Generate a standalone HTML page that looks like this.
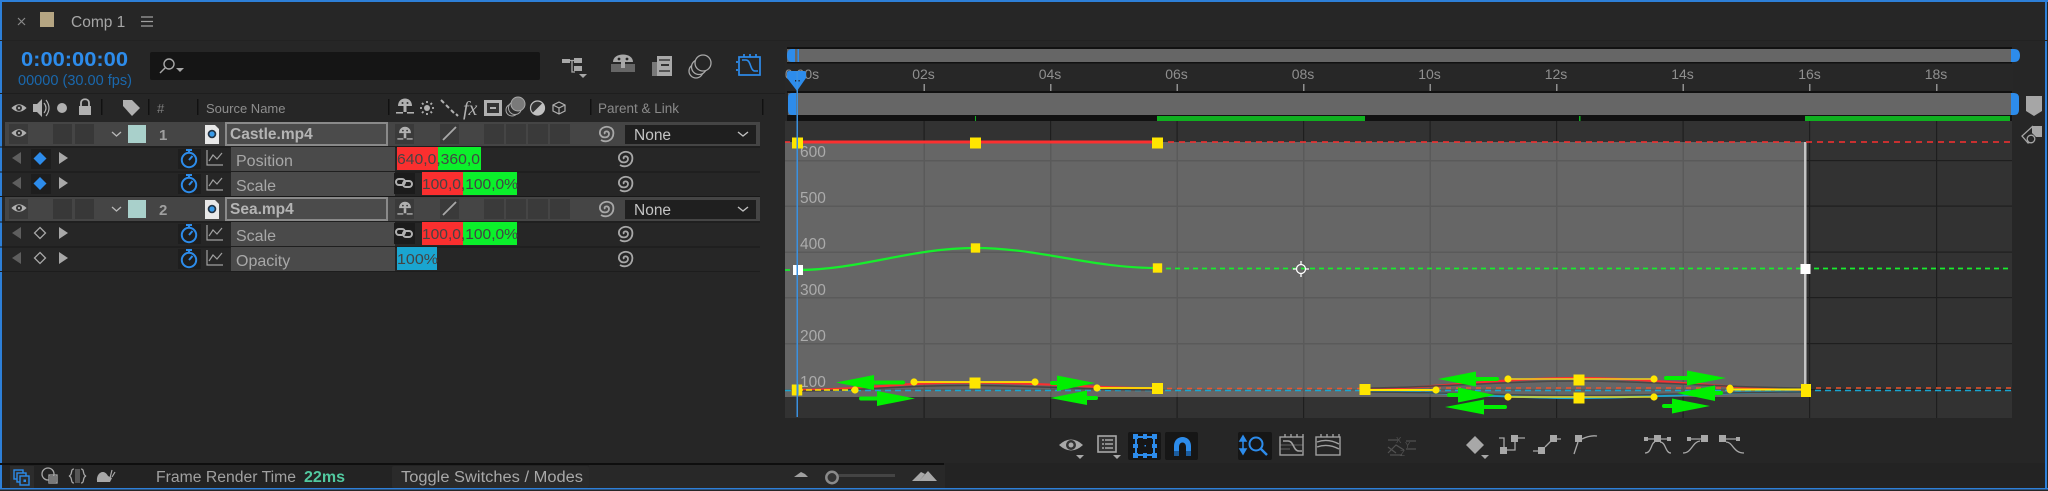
<!DOCTYPE html>
<html><head><meta charset="utf-8"><title>Comp 1</title>
<style>
html,body{margin:0;padding:0;background:#262626;width:2048px;height:491px;overflow:hidden}
svg{display:block}
text{font-family:"Liberation Sans",sans-serif}
</style></head><body>
<svg xmlns="http://www.w3.org/2000/svg" width="2048" height="491" viewBox="0 0 2048 491">
<defs>
<g id="eye"><path d="M-8 0Q0-8 8 0Q0 8-8 0Z" fill="#b0b0b0"/><circle r="3.2" fill="#333"/><circle r="1.2" fill="#b0b0b0"/></g>
<g id="spiral" fill="none" stroke="#a8a8a8" stroke-width="1.8"><path d="M-1 1C-3-2 3-3 3 1C3 5-4 6-6 1C-7-5 0-8 5-5C8-3 8 2 6 5C3 9-2 9-5 7"/></g>
<g id="shy"><path d="M-7-1C-7-11 7-11 7-1Z" fill="#b0b0b0"/><rect x="-1.5" y="-1" width="3" height="6" fill="#b0b0b0"/><circle cx="-2.5" cy="-4" r="1" fill="#333"/><circle cx="2.5" cy="-4" r="1" fill="#333"/><rect x="-9" y="5" width="7" height="1.6" fill="#b0b0b0"/><rect x="2" y="5" width="7" height="1.6" fill="#b0b0b0"/></g>
<g id="watch" fill="none" stroke="#2d8ceb" stroke-width="2"><circle cy="2" r="7.2"/><path d="M-3-8H3M0-8V-5M0 2L3.5-2"/></g>
<g id="gr" fill="none" stroke="#a0a0a0" stroke-width="1.2"><path d="M-8-8V7H8"/><path d="M-6 3L-2-3L2 1L7-5"/></g>
<g id="link" fill="none" stroke="#b0b0b0" stroke-width="2"><rect x="-8" y="-4" width="9" height="6" rx="3"/><rect x="-1" y="-2" width="9" height="6" rx="3"/></g>
<g id="file"><path d="M-7-9H3L7-5V10H-7Z" fill="#e8e8e8"/><circle r="4.3" fill="#234"/><circle r="2.6" fill="#3a9be8"/></g>
<path id="la" d="M4-6V6L-5 0Z" fill="#5e5e5e"/>
<path id="ra" d="M-4-6V6L5 0Z" fill="#a8a8a8"/>
<rect id="k" x="-5.500" y="-5.500" width="11" height="11" fill="#ffe600"/>
</defs>

<rect width="2048" height="491" fill="#262626"/>
<rect x="0" y="0" width="2048" height="2" fill="#2d7fd8"/>
<rect x="0" y="0" width="2" height="488" fill="#2d7fd8"/>
<rect x="2045" y="0" width="2" height="488" fill="#2d7fd8"/>
<rect x="0" y="488" width="2048" height="1.500" fill="#2d7fd8"/>

<!-- tab -->
<path d="M18 18L25 25M25 18L18 25" stroke="#8a8a8a" stroke-width="1.200"/>
<rect x="40" y="12" width="14" height="15" fill="#b5a582"/>
<text x="71" y="27" font-size="15.500" fill="#a6a6a6">Comp 1</text>
<path d="M141 17H153M141 21.500H153M141 26H153" stroke="#a0a0a0" stroke-width="1.200"/>
<rect x="0" y="40" width="2048" height="1" fill="#222"/>

<!-- timecode -->
<text x="21" y="66" font-size="20" font-weight="bold" fill="#2d8ceb" textLength="107" lengthAdjust="spacingAndGlyphs">0:00:00:00</text>
<text x="18" y="85" font-size="14.500" fill="#1a68ad" textLength="114" lengthAdjust="spacingAndGlyphs">00000 (30.00 fps)</text>
<rect x="150" y="52" width="390" height="28" rx="2" fill="#151515"/>
<circle cx="169" cy="64" r="5" fill="none" stroke="#a8a8a8" stroke-width="1.400"/>
<path d="M165 68L160 73" stroke="#a8a8a8" stroke-width="1.400"/>
<path d="M176 68H184L180 72Z" fill="#a8a8a8"/>

<!-- top right icons of timeline panel -->
<g fill="#a8a8a8"><rect x="562" y="59" width="8" height="4"/><rect x="574" y="58" width="8" height="5"/><rect x="574" y="66" width="8" height="5"/><path d="M570 60.500H574M572 60V72H575" stroke="#a8a8a8" fill="none" stroke-width="1.300"/><path d="M579 74H587L583 78Z"/></g>
<g transform="translate(623 62)"><path d="M-10 0C-10-10 10-10 10 0Z" fill="#a8a8a8"/><circle cx="-4" cy="-3" r="1.400" fill="#262626"/><circle cx="4" cy="-3" r="1.400" fill="#262626"/><rect x="-12" y="2" width="24" height="8" fill="#666"/><rect x="-2" y="0" width="4" height="6" fill="#a8a8a8"/></g>
<g><rect x="657" y="56" width="15" height="20" fill="#a8a8a8"/><rect x="652" y="62" width="5" height="14" fill="#787878"/><rect x="661" y="64" width="8" height="2" fill="#333"/><rect x="659" y="59" width="11" height="2" fill="#555"/><rect x="659" y="70" width="11" height="2" fill="#555"/></g>
<g fill="#262626" stroke="#a8a8a8" stroke-width="1.300"><circle cx="696" cy="71" r="7"/><circle cx="699" cy="67" r="7.500"/><circle cx="703" cy="63" r="8"/></g>
<g fill="none" stroke="#2d8ceb" stroke-width="1.700"><rect x="739" y="57" width="21" height="18"/><path d="M738 62H736M738 70H736M744 57V54M750 57V54M756 57V54"/><path d="M742 60H746C751 60 750 71 755 71H758" stroke-width="1.600"/></g>

<!-- header -->
<rect x="0" y="93" width="785" height="1" fill="#1e1e1e"/>
<use href="#eye" transform="translate(19 108) scale(.95)"/>
<path d="M33 104H37L42 99V117L37 112H33Z" fill="#b0b0b0"/><path d="M44 103Q48 108 44 113M46 100Q52 108 46 116" fill="none" stroke="#b0b0b0" stroke-width="1.200"/>
<circle cx="62" cy="108" r="5" fill="#b0b0b0"/>
<rect x="79" y="106" width="12" height="9" fill="#b0b0b0"/><path d="M81 106V103C81 98 89 98 89 103V106" fill="none" stroke="#b0b0b0" stroke-width="1.800"/>
<path d="M123 100H132L140 108L132 116L123 106Z" fill="#b0b0b0"/>
<text x="157" y="113" font-size="13" fill="#7f7f7f">#</text>
<text x="206" y="113" font-size="13" fill="#8e8e8e">Source Name</text>
<g fill="#111"><rect x="101" y="99" width="1.500" height="16"/><rect x="148" y="99" width="1.500" height="16"/><rect x="197" y="99" width="1.500" height="16"/><rect x="388" y="99" width="1.500" height="16"/><rect x="590" y="99" width="1.500" height="16"/><rect x="762" y="99" width="1.500" height="16"/></g>
<use href="#shy" transform="translate(405 107)"/>
<g stroke="#b0b0b0" stroke-width="1.800"><circle cx="427" cy="108" r="3" fill="#b0b0b0" stroke="none"/><path d="M427 101V103M427 113V115M420 108H422M432 108H434M422 103L423.500 104.500M430.500 111.500L432 113M432 103L430.500 104.500M423.500 111.500L422 113"/></g>
<path d="M441 100L444 103M446 105L449 108M451 110L454 113M456 114L458 116" stroke="#b0b0b0" stroke-width="2" fill="none"/>
<text x="463" y="115" font-size="20" font-style="italic" style="font-family:'Liberation Serif',serif" fill="#b0b0b0">fx</text>
<g><rect x="484" y="100" width="18" height="16" fill="#b0b0b0"/><rect x="487" y="103" width="12" height="10" fill="#333"/><rect x="490" y="107" width="6" height="2" fill="#b0b0b0"/></g>
<g stroke="#a8a8a8" stroke-width="1"><circle cx="512" cy="110" r="6" fill="#2c2c2c"/><circle cx="515" cy="108" r="6.500" fill="#2c2c2c"/><circle cx="518" cy="104" r="7" fill="#7a7a7a"/></g>
<circle cx="537.500" cy="108" r="7" fill="#c0c0c0"/><path d="M542.500 103A7 7 0 0 0 532.500 113Z" fill="#333"/><circle cx="537.500" cy="108" r="7" fill="none" stroke="#c0c0c0" stroke-width="1.200"/>
<path d="M559 102L565 105V111L559 114L553 111V105Z M553 105L559 108L565 105M559 108V114" fill="none" stroke="#b0b0b0" stroke-width="1.200"/>
<text x="598" y="113" font-size="13.500" fill="#8a8a8a">Parent &amp; Link</text>

<!-- Layer rows -->
<g id="rows">
<rect x="5" y="122" width="755" height="24" fill="#454545"/>
<rect x="5" y="197" width="755" height="24" fill="#454545"/>
<rect x="0" y="146.500" width="760" height="1" fill="#181818"/><rect x="0" y="171.500" width="760" height="1" fill="#181818"/><rect x="0" y="196" width="760" height="1" fill="#181818"/><rect x="0" y="221.500" width="760" height="1" fill="#181818"/><rect x="0" y="246.500" width="760" height="1" fill="#181818"/><rect x="0" y="271" width="760" height="1" fill="#1d1d1d"/>
</g>
<!-- layer1 -->
<g>
<rect x="9" y="124" width="19" height="20" fill="#3a3a3a"/><use href="#eye" transform="translate(19 133) scale(.95)"/>
<rect x="53" y="124" width="19" height="20" fill="#383838"/><rect x="75" y="124" width="19" height="20" fill="#383838"/>
<path d="M112 132L116.500 136L121 132" fill="none" stroke="#b8b8b8" stroke-width="1.300"/>
<rect x="128" y="125" width="18" height="18" fill="#a9d0cb"/>
<text x="159" y="140" font-size="15" font-weight="bold" fill="#a0a0a0">1</text>
<use href="#file" transform="translate(212 134)"/>
<rect x="226" y="123" width="161" height="22" fill="#4b4b4b" stroke="#8a8a8a" stroke-width="2"/>
<text x="230" y="139" font-size="15.500" font-weight="bold" fill="#b4b4b4">Castle.mp4</text>
<rect x="395" y="124" width="19" height="20" fill="#3a3a3a"/><use href="#shy" transform="translate(405 134) scale(.85)"/>
<rect x="440" y="124" width="19" height="20" fill="#3a3a3a"/><path d="M443 140L456 127" stroke="#a8a8a8" stroke-width="1.800"/>
<rect x="484" y="124" width="20" height="20" fill="#3a3a3a"/><rect x="506" y="124" width="20" height="20" fill="#3a3a3a"/><rect x="528" y="124" width="20" height="20" fill="#3a3a3a"/><rect x="550" y="124" width="20" height="20" fill="#3a3a3a"/>
<use href="#spiral" transform="translate(606 133)"/>
<rect x="625" y="125" width="131" height="19" fill="#1f1f1f"/>
<text x="634" y="140" font-size="15.500" fill="#c4c4c4">None</text>
<path d="M738 132L743 136L748 132" fill="none" stroke="#c0c0c0" stroke-width="1.400"/>
</g>
<!-- layer2 -->
<g>
<rect x="9" y="199" width="19" height="20" fill="#3a3a3a"/><use href="#eye" transform="translate(19 208) scale(.95)"/>
<rect x="53" y="199" width="19" height="20" fill="#383838"/><rect x="75" y="199" width="19" height="20" fill="#383838"/>
<path d="M112 207L116.500 211L121 207" fill="none" stroke="#b8b8b8" stroke-width="1.300"/>
<rect x="128" y="200" width="18" height="18" fill="#a9d0cb"/>
<text x="159" y="215" font-size="15" font-weight="bold" fill="#a0a0a0">2</text>
<use href="#file" transform="translate(212 209)"/>
<rect x="226" y="198" width="161" height="22" fill="#4b4b4b" stroke="#8a8a8a" stroke-width="2"/>
<text x="230" y="214" font-size="15.500" font-weight="bold" fill="#b4b4b4">Sea.mp4</text>
<rect x="395" y="199" width="19" height="20" fill="#3a3a3a"/><use href="#shy" transform="translate(405 209) scale(.85)"/>
<rect x="440" y="199" width="19" height="20" fill="#3a3a3a"/><path d="M443 215L456 202" stroke="#a8a8a8" stroke-width="1.800"/>
<rect x="484" y="199" width="20" height="20" fill="#3a3a3a"/><rect x="506" y="199" width="20" height="20" fill="#3a3a3a"/><rect x="528" y="199" width="20" height="20" fill="#3a3a3a"/><rect x="550" y="199" width="20" height="20" fill="#3a3a3a"/>
<use href="#spiral" transform="translate(606 208)"/>
<rect x="625" y="200" width="131" height="19" fill="#1f1f1f"/>
<text x="634" y="215" font-size="15.500" fill="#c4c4c4">None</text>
<path d="M738 207L743 211L748 207" fill="none" stroke="#c0c0c0" stroke-width="1.400"/>
</g>
<!-- property rows -->
<g fill="#4a4a4a"><rect x="231" y="147" width="164" height="24"/><rect x="231" y="172" width="164" height="24"/><rect x="231" y="222" width="164" height="24"/><rect x="231" y="247" width="164" height="24"/></g>
<g fill="#1e1e1e"><rect x="31" y="149" width="20" height="20"/><rect x="31" y="174" width="20" height="20"/><rect x="178" y="149" width="23" height="20"/><rect x="178" y="174" width="23" height="20"/><rect x="178" y="224" width="23" height="20"/><rect x="178" y="249" width="23" height="20"/></g>
<use href="#la" transform="translate(17 158)"/><use href="#la" transform="translate(17 183)"/><use href="#la" transform="translate(17 233)"/><use href="#la" transform="translate(17 258)"/>
<use href="#ra" transform="translate(63 158)"/><use href="#ra" transform="translate(63 183)"/><use href="#ra" transform="translate(63 233)"/><use href="#ra" transform="translate(63 258)"/>
<path d="M40 152L46.500 158.500L40 165L33.500 158.500Z" fill="#2d8ceb"/>
<path d="M40 177L46.500 183.500L40 190L33.500 183.500Z" fill="#2d8ceb"/>
<path d="M40 227.500L45.500 233L40 238.500L34.500 233Z" fill="none" stroke="#a8a8a8" stroke-width="1.300"/>
<path d="M40 252.500L45.500 258L40 263.500L34.500 258Z" fill="none" stroke="#a8a8a8" stroke-width="1.300"/>
<use href="#watch" transform="translate(189 158)"/><use href="#watch" transform="translate(189 183)"/><use href="#watch" transform="translate(189 233)"/><use href="#watch" transform="translate(189 258)"/>
<use href="#gr" transform="translate(215 158)"/><use href="#gr" transform="translate(215 183)"/><use href="#gr" transform="translate(215 233)"/><use href="#gr" transform="translate(215 258)"/>
<g font-size="16" fill="#a8a8a8"><text x="236" y="166">Position</text><text x="236" y="191">Scale</text><text x="236" y="241">Scale</text><text x="236" y="266">Opacity</text></g>

<rect x="397" y="147" width="41" height="23" fill="#fb2f2f"/><rect x="438" y="147" width="43" height="23" fill="#0bf02b"/>
<text x="397" y="164" font-size="15" fill="#444" textLength="83" lengthAdjust="spacingAndGlyphs">640,0,360,0</text>
<rect x="394" y="173" width="21" height="21" fill="#1b1b1b"/><use href="#link" transform="translate(404 183)"/>
<rect x="422" y="172" width="41" height="23" fill="#fb2f2f"/><rect x="463" y="172" width="54" height="23" fill="#0bf02b"/>
<text x="422" y="189" font-size="15" fill="#444" textLength="96" lengthAdjust="spacingAndGlyphs">100,0,100,0%</text>
<rect x="394" y="223" width="21" height="21" fill="#1b1b1b"/><use href="#link" transform="translate(404 233)"/>
<rect x="422" y="222" width="41" height="23" fill="#fb2f2f"/><rect x="463" y="222" width="54" height="23" fill="#0bf02b"/>
<text x="422" y="239" font-size="15" fill="#444" textLength="96" lengthAdjust="spacingAndGlyphs">100,0,100,0%</text>
<rect x="397" y="247" width="40" height="23" fill="#1aa5d0"/>
<text x="397" y="264" font-size="15" fill="#444" textLength="41" lengthAdjust="spacingAndGlyphs">100%</text>
<use href="#spiral" transform="translate(625 158)"/><use href="#spiral" transform="translate(625 183)"/><use href="#spiral" transform="translate(625 233)"/><use href="#spiral" transform="translate(625 258)"/>

<!-- timeline nav -->
<rect x="785" y="47" width="1228" height="74" fill="#272727"/>
<rect x="787" y="47" width="1225" height="2" fill="#111"/>
<rect x="787" y="49" width="1224" height="13" fill="#666"/>
<rect x="787" y="62" width="1225" height="1.500" fill="#111"/>
<path d="M795 49H792Q787 49 787 55.500Q787 62 792 62H795Z" fill="#2d8ceb"/>
<rect x="797.500" y="49" width="1.500" height="13" fill="#2d8ceb"/>
<path d="M2011 49H2014Q2020 49 2020 55.500Q2020 62 2014 62H2011Z" fill="#2d8ceb"/>
<g font-size="14" fill="#8f8f8f" text-anchor="middle">
<text x="802" y="79">0:00s</text><text x="923.500" y="79">02s</text><text x="1050" y="79">04s</text><text x="1176.500" y="79">06s</text><text x="1303" y="79">08s</text><text x="1429.500" y="79">10s</text><text x="1556" y="79">12s</text><text x="1682.500" y="79">14s</text><text x="1809.500" y="79">16s</text><text x="1936" y="79">18s</text>
</g>
<g fill="#8f8f8f"><rect x="923.500" y="84" width="1.500" height="7"/><rect x="1050" y="84" width="1.500" height="7"/><rect x="1176.500" y="84" width="1.500" height="7"/><rect x="1303" y="84" width="1.500" height="7"/><rect x="1429.500" y="84" width="1.500" height="7"/><rect x="1556" y="84" width="1.500" height="7"/><rect x="1682.500" y="84" width="1.500" height="7"/><rect x="1809" y="84" width="1.500" height="7"/><rect x="1936" y="84" width="1.500" height="7"/></g>
<rect x="787" y="91" width="1225" height="2" fill="#111"/>
<rect x="788" y="93" width="1223" height="22" fill="#666"/>
<rect x="787" y="115" width="1225" height="6" fill="#111"/>
<path d="M796 93H792Q788 93 788 98V110Q788 115 792 115H796Z" fill="#2d8ceb"/>
<path d="M2011 93H2014Q2019 93 2019 98V110Q2019 115 2014 115H2011Z" fill="#2d8ceb"/>
<g fill="#10b020"><rect x="975" y="116" width="1" height="5"/><rect x="1157" y="116" width="208" height="5"/><rect x="1579" y="116" width="1.500" height="5"/><rect x="1805" y="116" width="205" height="5"/></g>

<!-- graph -->
<rect x="785" y="121" width="1227" height="297" fill="#323232"/>
<rect x="785" y="142" width="1020" height="255" fill="#666"/>
<g fill="#5a5a5a"><rect x="785" y="160" width="1020" height="1.500"/><rect x="785" y="205.500" width="1020" height="1.500"/><rect x="785" y="251.500" width="1020" height="1.500"/><rect x="785" y="297" width="1020" height="1.500"/><rect x="785" y="343" width="1020" height="1.500"/><rect x="785" y="389" width="1020" height="1.500"/></g>
<g fill="#1e1e1e"><rect x="1806" y="160" width="206" height="1.200"/><rect x="1806" y="205.500" width="206" height="1.200"/><rect x="1806" y="251.500" width="206" height="1.200"/><rect x="1806" y="297" width="206" height="1.200"/><rect x="1806" y="343" width="206" height="1.200"/><rect x="1806" y="389" width="206" height="1.200"/></g>
<g fill="#5a5a5a"><rect x="923.500" y="142" width="1.500" height="255"/><rect x="1050" y="142" width="1.500" height="255"/><rect x="1176.500" y="142" width="1.500" height="255"/><rect x="1303" y="142" width="1.500" height="255"/><rect x="1429.500" y="142" width="1.500" height="255"/><rect x="1556" y="142" width="1.500" height="255"/><rect x="1682.500" y="142" width="1.500" height="255"/></g>
<g fill="#1e1e1e"><rect x="923.500" y="121" width="1.200" height="21"/><rect x="1050" y="121" width="1.200" height="21"/><rect x="1176.500" y="121" width="1.200" height="21"/><rect x="1303" y="121" width="1.200" height="21"/><rect x="1429.500" y="121" width="1.200" height="21"/><rect x="1556" y="121" width="1.200" height="21"/><rect x="1682.500" y="121" width="1.200" height="21"/><rect x="1809" y="121" width="1.200" height="297"/><rect x="1936" y="121" width="1.200" height="297"/>
<rect x="923.500" y="397" width="1.200" height="21"/><rect x="1050" y="397" width="1.200" height="21"/><rect x="1176.500" y="397" width="1.200" height="21"/><rect x="1303" y="397" width="1.200" height="21"/><rect x="1429.500" y="397" width="1.200" height="21"/><rect x="1556" y="397" width="1.200" height="21"/><rect x="1682.500" y="397" width="1.200" height="21"/></g>
<rect x="1804" y="142" width="2.500" height="248" fill="#c4c4c4"/>
<g font-size="15.500" fill="#ababab"><text x="800" y="157">600</text><text x="800" y="203">500</text><text x="800" y="249">400</text><text x="800" y="295">300</text><text x="800" y="341">200</text><text x="800" y="387">100</text></g>

<!-- red position -->
<path d="M785 142H797" stroke="#fb2f2f" stroke-width="1.500" stroke-dasharray="5 4"/>
<path d="M797 142H1157" stroke="#fb3030" stroke-width="3"/>
<path d="M1157 142H2012" stroke="#fb2f2f" stroke-width="1.500" stroke-dasharray="6 5"/>
<use href="#k" transform="translate(797.500 143)"/><use href="#k" transform="translate(975.500 143)"/><use href="#k" transform="translate(1157.500 143)"/>
<!-- green -->
<path d="M797 270C860 270 910 248 975 248C1040 248 1090 268 1157 268" fill="none" stroke="#17ee2c" stroke-width="2.200"/>
<path d="M1157 268.500H2012" stroke="#17ee2c" stroke-width="1.800" stroke-dasharray="5 4"/>
<path d="M785 270H797" stroke="#17ee2c" stroke-width="1.800" stroke-dasharray="5 4"/>
<use href="#k" transform="translate(975.500 248) scale(.85)"/><use href="#k" transform="translate(1157.500 268) scale(.85)"/>
<rect x="793" y="265" width="10" height="10" fill="#fff"/><rect x="1800.500" y="264" width="10" height="10" fill="#fff"/>
<g fill="none" stroke="#fff" stroke-width="1.300"><circle cx="1301" cy="269" r="4.500"/><path d="M1293 269H1297M1305 269H1309M1301 261V265M1301 273V277"/></g>

<!-- bottom curves -->
<path d="M785 390.500H2012" stroke="#1aa5d0" stroke-width="1.600" stroke-dasharray="6 4"/>
<path d="M1157 388.500H1365M1806 388H2012" stroke="#f0522a" stroke-width="1.600" stroke-dasharray="5 5"/>
<path d="M797 390C860 390 900 382 975 382.500C1050 383 1090 388 1157 388.500" fill="none" stroke="#fb2f2f" stroke-width="2.200"/>
<path d="M797 391C860 391 900 385 975 385.500C1050 386 1090 390 1157 390" fill="none" stroke="#444" stroke-width="1.500"/>
<path d="M797 390H855" stroke="#ffe600" stroke-width="1.400" stroke-dasharray="6 3"/>
<path d="M914 382H1035M1097 388H1157" stroke="#ffe600" stroke-width="1.800"/>
<use href="#k" transform="translate(797 390) scale(.95 1)"/><rect x="797" y="384" width="1.500" height="11" fill="#2d8ceb"/>
<use href="#k" transform="translate(975 383)"/><use href="#k" transform="translate(1157.500 388.500)"/>
<g fill="#ffe600"><circle cx="855" cy="390" r="3.600"/><circle cx="914" cy="382" r="3.600"/><circle cx="1035" cy="382" r="3.600"/><circle cx="1097" cy="388" r="3.600"/></g>

<path d="M1365 389C1430 389 1500 378 1579 378C1650 378 1730 389 1806 390" fill="none" stroke="#fb2f2f" stroke-width="2.200"/>
<path d="M1365 391C1430 391 1500 398 1579 398C1650 398 1730 391 1806 392" fill="none" stroke="#1aa5d0" stroke-width="2.200"/>
<path d="M1365 388C1430 388 1500 381 1579 381C1650 381 1730 388 1806 388" fill="none" stroke="#484848" stroke-width="1.500"/>
<path d="M1365 392C1430 392 1500 395.500 1579 395.500C1650 395.500 1730 392 1806 392" fill="none" stroke="#484848" stroke-width="1.500"/>
<path d="M1436 388H1730" stroke="#f0522a" stroke-width="1.600" stroke-dasharray="5 5"/>
<path d="M1365 390H1436M1730 389.500H1806" stroke="#ffe600" stroke-width="2"/>
<path d="M1508 379H1654M1508 397H1654" stroke="#e8d820" stroke-width="1.500"/>
<g fill="#ffe600"><circle cx="1436" cy="390" r="3.600"/><ellipse cx="1730" cy="389" rx="3.600" ry="4.500"/><circle cx="1508" cy="379" r="3.600"/><circle cx="1654" cy="379" r="3.600"/><circle cx="1508" cy="397" r="3.600"/><circle cx="1654" cy="397" r="3.600"/></g>
<use href="#k" transform="translate(1365 389.500)"/><use href="#k" transform="translate(1579 380)"/><use href="#k" transform="translate(1579 398)"/>
<rect x="1801" y="384" width="10" height="13" fill="#ffe600"/>

<!-- green arrows -->
<g fill="#00f000">
<path d="M836 382.500L874 375V380.500H903Q905 380.500 905 382.500Q905 384.500 903 384.500H874V390Z"/>
<path d="M915 398.500L877 391V396.500H861Q859 396.500 859 398.500Q859 400.500 861 400.500H877V406Z"/>
<path d="M1095 383L1057 375.500V381H1052Q1050 381 1050 383Q1050 385 1052 385H1057V391Z"/>
<path d="M1050 398L1087 390.500V396H1096Q1098 396 1098 398Q1098 400 1096 400H1087V405Z"/>
<path d="M1438 379L1476 371.500V377H1497Q1499 377 1499 379Q1499 381 1497 381H1476V386.500Z"/>
<path d="M1726 378L1687 370.500V376H1666Q1664 376 1664 378Q1664 380 1666 380H1687V385.500Z"/>
<path d="M1495 395L1458 387.500V393H1449Q1447 393 1447 395Q1447 397 1449 397H1458V402.500Z"/>
<path d="M1677 393L1715 385.500V391H1721Q1723 391 1723 393Q1723 395 1721 395H1715V401Z"/>
<path d="M1445 407L1484 399.500V405H1505Q1507 405 1507 407Q1507 409 1505 409H1484V414.500Z"/>
<path d="M1710 406L1672 398.500V404H1664Q1662 404 1662 406Q1662 408 1664 408H1672V413.500Z"/>
</g>

<!-- playhead -->
<path d="M787 73Q787 71 789 71H804Q806 71 806 73V78L797 91L787 78Z" fill="#2d8ceb"/>
<rect x="796.500" y="71" width="1.500" height="346" fill="#3a90e0"/>
<rect x="795" y="80" width="1.200" height="1.500" fill="#222"/><rect x="798.500" y="80" width="1.200" height="1.500" fill="#222"/>

<!-- right column -->
<path d="M2026 96H2042V111L2034 116L2026 111Z" fill="#a6a6a6"/>
<path d="M2032 126H2042V137H2036L2032 133Z" fill="#a6a6a6"/>
<path d="M2033 126L2022 136L2028 143L2034 141" fill="none" stroke="#a6a6a6" stroke-width="1.300"/><circle cx="2031" cy="139" r="3.800" fill="#262626" stroke="#a6a6a6" stroke-width="1.300"/>

<!-- graph toolbar -->
<g transform="translate(1071 445)"><path d="M-12 0Q0-11 12 0Q0 11-12 0Z" fill="#a8a8a8"/><circle r="5" fill="#333"/><circle r="2.500" fill="#a8a8a8"/></g>
<path d="M1076 455H1084L1080 459Z" fill="#a8a8a8"/>
<rect x="1098" y="436" width="18" height="16" fill="#333" stroke="#a8a8a8" stroke-width="1.600"/>
<path d="M1102 440H1104M1105 440H1113M1102 444H1104M1105 444H1113M1102 448H1104M1105 448H1113" stroke="#a8a8a8" stroke-width="1.400"/>
<path d="M1113 455H1121L1117 459Z" fill="#a8a8a8"/>
<rect x="1128" y="432" width="33" height="28" rx="2" fill="#161616"/><rect x="1165" y="432" width="33" height="28" rx="2" fill="#161616"/><rect x="1238" y="432" width="34" height="28" rx="2" fill="#161616"/>
<rect x="1136" y="437" width="18" height="18" fill="none" stroke="#2d8ceb" stroke-width="2"/>
<g fill="#2d8ceb"><rect x="1133" y="434" width="5" height="5"/><rect x="1143" y="434" width="4" height="5"/><rect x="1152" y="434" width="5" height="5"/><rect x="1133" y="453" width="5" height="5"/><rect x="1143" y="453" width="4" height="5"/><rect x="1152" y="453" width="5" height="5"/><rect x="1133" y="444" width="5" height="4"/><rect x="1152" y="444" width="5" height="4"/><rect x="1144.500" y="445" width="1.500" height="1.500"/></g>
<path d="M1174 456V446C1174 434 1191 434 1191 446V456H1186V447C1186 441 1179 441 1179 447V456Z" fill="#2d8ceb"/><rect x="1174" y="451" width="5" height="5" fill="#1b5c9e"/><rect x="1186" y="451" width="5" height="5" fill="#1b5c9e"/>
<path d="M1243 438V452M1243 436L1240 441H1246ZM1243 454L1240 449H1246Z" fill="#2d8ceb" stroke="#2d8ceb" stroke-width="1.500"/>
<circle cx="1256" cy="444" r="6.500" fill="none" stroke="#2d8ceb" stroke-width="2"/><path d="M1261 449L1267 455" stroke="#2d8ceb" stroke-width="2.400"/>
<g fill="none" stroke="#a0a0a0" stroke-width="1.400"><rect x="1280" y="437" width="23" height="18"/><path d="M1283 441H1288C1294 441 1293 451 1299 451H1302" stroke-width="1.600"/><path d="M1285 437V434M1291 437V434M1297 437V434M1303 437V434"/><path d="M1280 445H1303M1280 449H1290" stroke-width=".5"/></g>
<g fill="none" stroke="#a0a0a0" stroke-width="1.400"><rect x="1316" y="437" width="24" height="18"/><path d="M1317 442Q1328 438 1339 444M1317 447Q1328 443 1339 449" stroke-width="1.400"/><path d="M1321 437V434M1327 437V434M1333 437V434M1339 437V434"/></g>
<g fill="none" stroke="#515151" stroke-width="1.200"><path d="M1388 440H1398M1406 441H1416M1388 453L1396 445L1404 450M1388 447L1396 453M1406 449H1416M1390 455H1402"/></g>
<text x="1396" y="443" font-size="8" fill="#515151">X</text><text x="1405" y="448" font-size="8" fill="#515151">Y</text><text x="1400" y="456" font-size="8" fill="#515151">Z</text>
<path d="M1475 436L1484 445L1475 454L1466 445Z" fill="#a8a8a8"/><path d="M1481 455H1489L1485 459Z" fill="#a8a8a8"/>
<g fill="#a8a8a8"><rect x="1511" y="435" width="7" height="7"/><rect x="1500" y="447" width="7" height="7"/><path d="M1518 438H1525M1507 450H1515V438M1499 438H1504V447" fill="none" stroke="#a8a8a8" stroke-width="1.300"/></g>
<g fill="#a8a8a8"><rect x="1550" y="435" width="7" height="7"/><rect x="1538" y="447" width="7" height="7"/><path d="M1557 439H1561M1545 447L1551 441M1533 451H1538" fill="none" stroke="#a8a8a8" stroke-width="1.300"/></g>
<rect x="1575" y="435" width="7" height="7" fill="#a8a8a8"/><path d="M1578 442Q1576 448 1574 454M1582 439Q1590 435 1597 436" fill="none" stroke="#a8a8a8" stroke-width="1.300"/>
<rect x="1654" y="435" width="7" height="7" fill="#a8a8a8"/><rect x="1644" y="437" width="4" height="4" fill="#a8a8a8"/><rect x="1667" y="437" width="4" height="4" fill="#a8a8a8"/><path d="M1646 439H1669M1645 453C1652 453 1651 442 1655 442M1671 453C1665 453 1666 442 1660 442" fill="none" stroke="#a8a8a8" stroke-width="1.300"/>
<rect x="1701" y="435" width="7" height="7" fill="#a8a8a8"/><rect x="1687" y="437" width="4" height="4" fill="#a8a8a8"/><path d="M1690 439H1702M1683 453C1692 453 1692 442 1700 441" fill="none" stroke="#a8a8a8" stroke-width="1.300"/>
<rect x="1719" y="435" width="7" height="7" fill="#a8a8a8"/><rect x="1736" y="437" width="4" height="4" fill="#a8a8a8"/><path d="M1726 439H1738M1726 442C1733 442 1733 453 1744 453" fill="none" stroke="#a8a8a8" stroke-width="1.300"/>

<!-- status bar -->
<rect x="2" y="463" width="2043" height="25" fill="#232323"/>
<rect x="0" y="463" width="944" height="2" fill="#0e0e0e"/>
<rect x="10" y="466" width="24" height="22" fill="#2c2c2c"/>
<g fill="none" stroke="#2d8ceb" stroke-width="1.400"><rect x="14" y="470" width="9" height="9"/><rect x="17" y="473" width="9" height="9" fill="#2c2c2c"/><rect x="20" y="476" width="9" height="9" fill="#2c2c2c"/></g><rect x="23.500" y="479.500" width="2.500" height="2.500" fill="#2d8ceb"/>
<circle cx="48" cy="474" r="6" fill="none" stroke="#a8a8a8" stroke-width="1.300"/><path d="M49 475H57V483H49Z" fill="none" stroke="#a8a8a8" stroke-width="1.300"/><rect x="49" y="476" width="7" height="7" fill="#787878"/>
<rect x="75" y="469" width="5" height="14" fill="#555"/><path d="M74 469C70 469 73 475 69 476C73 477 70 483 74 483M81 469C85 469 82 475 86 476C82 477 85 483 81 483" fill="none" stroke="#a8a8a8" stroke-width="1.300"/>
<path d="M97 481C96 473 104 468 108 476L112 478L110 482H97Z" fill="#a8a8a8"/><path d="M110 478L112 470M112 477L115 472" stroke="#a8a8a8" stroke-width="1.200"/>
<text x="156" y="482" font-size="15.500" fill="#a0a0a0" textLength="140" lengthAdjust="spacingAndGlyphs">Frame Render Time</text>
<text x="304" y="482" font-size="15.500" font-weight="bold" fill="#52c9a0" textLength="41" lengthAdjust="spacingAndGlyphs">22ms</text>
<rect x="392" y="466" width="197" height="22" rx="2" fill="#2a2a2a"/>
<text x="401" y="482" font-size="15.500" fill="#a8a8a8" textLength="182" lengthAdjust="spacingAndGlyphs">Toggle Switches / Modes</text>
<rect x="589" y="465" width="356" height="23" fill="#282828"/>
<path d="M794 477L801 472L805 474L808 477Z" fill="#a0a0a0"/>
<rect x="838" y="474" width="57" height="3" fill="#444"/>
<circle cx="832" cy="477.500" r="5.700" fill="#333" stroke="#8a8a8a" stroke-width="2.500"/>
<path d="M912 481L921 472L925 474L919 481ZM919 481L928 471L937 481Z" fill="#a8a8a8"/>
</svg>
</body></html>
